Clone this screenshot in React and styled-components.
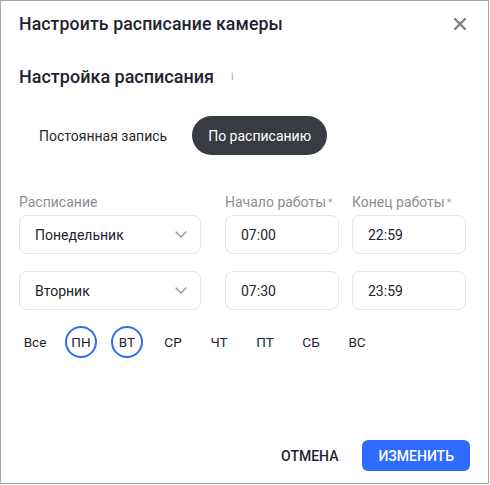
import React from "react";
import styled, { createGlobalStyle } from "styled-components";

const GlobalStyle = createGlobalStyle`
  body {
    margin: 0;
    font-family: Roboto, "Noto Sans", Arial, sans-serif;
    background: #ffffff;
  }
`;

const DialogStyled = styled.section`
  box-sizing: border-box;
  width: 489px;
  height: 484px;
  border: 1px solid #a6a6a6;
  background: #fff;
  padding: 0 18px;
  display: flex;
  flex-direction: column;
  color: #1f2330;
`;

const HeaderStyled = styled.header`
  display: flex;
  align-items: center;
  justify-content: space-between;
  height: 22px;
  margin-top: 12px;
`;

const TitleStyled = styled.h1`
  margin: 0;
  font-size: 17.7px;
  font-weight: 500;
  letter-spacing: 0.1px;
`;

const CloseStyled = styled.button`
  border: 0;
  background: none;
  padding: 0;
  width: 14px;
  height: 14px;
  margin-right: 3px;
  display: flex;
  cursor: pointer;
`;

const SectionTitleStyled = styled.h2`
  margin: 30px 0 0;
  height: 22px;
  display: flex;
  align-items: center;
  font-size: 18px;
  font-weight: 500;
`;

const InfoStyled = styled.span`
  margin-left: 17px;
  font-size: 11px;
  font-weight: 400;
  color: #a8abb1;
`;

const TabsStyled = styled.div`
  display: flex;
  align-items: center;
  margin-top: 29px;
  height: 39px;
`;

const TabStyled = styled.button`
  height: 39px;
  border: 0;
  border-radius: 20px;
  padding: 0 16px 0 ${(p) => (p.$active ? "16px" : "20px")};
  font-family: inherit;
  font-size: 14px;
  background: ${(p) => (p.$active ? "#393b42" : "transparent")};
  color: ${(p) => (p.$active ? "#ffffff" : "#2a2730")};
  margin-right: ${(p) => (p.$active ? "0" : "9px")};
  cursor: pointer;
`;

const FormGridStyled = styled.div`
  display: grid;
  grid-template-columns: 193px 114px 114px;
  column-gap: 13px;
  margin-top: 39px;
`;

const LabelStyled = styled.div`
  font-size: 14px;
  color: #8a8d94;
  height: 16px;
  line-height: 16px;
  margin-bottom: 5px;
  white-space: nowrap;
`;

const StarStyled = styled.span`
  font-size: 10px;
  vertical-align: 1px;
  margin-left: 2px;
  color: #9a9da3;
`;

const FieldStyled = styled.div`
  box-sizing: border-box;
  width: ${(p) => p.$width || "100%"};
  height: 39px;
  border: 1px solid #e2e5ea;
  border-radius: 8px;
  display: flex;
  align-items: center;
  justify-content: space-between;
  padding: 0 13px 0 15px;
  font-size: 14px;
  color: #1f2330;
  margin-bottom: ${(p) => (p.$last ? "0" : "17px")};
`;

const DaysStyled = styled.div`
  display: flex;
  gap: 14px;
  margin-top: 16px;
`;

const DayStyled = styled.button`
  box-sizing: border-box;
  width: 32px;
  height: 32px;
  border-radius: 50%;
  border: 2px solid ${(p) => (p.$selected ? "#2f6bf2" : "transparent")};
  background: none;
  padding: 0;
  font-family: inherit;
  font-size: 13.5px;
  color: #1f2330;
  display: flex;
  align-items: center;
  justify-content: center;
  cursor: pointer;
`;

const FooterStyled = styled.footer`
  margin-top: auto;
  margin-bottom: 12px;
  display: flex;
  justify-content: flex-end;
  align-items: center;
  gap: 8px;
`;

const ButtonStyled = styled.button`
  height: 31px;
  border: 0;
  border-radius: 6px;
  padding: 0 16px;
  font-family: inherit;
  font-size: 14px;
  font-weight: 500;
  text-transform: uppercase;
  background: ${(p) => (p.$primary ? "#2f6bff" : "transparent")};
  color: ${(p) => (p.$primary ? "#ffffff" : "#1f2330")};
  cursor: pointer;
`;

const Chevron = () => (
  <svg width="12" height="7" viewBox="0 0 12 7" fill="none">
    <path d="M1 1l5 5 5-5" stroke="#8a8d94" strokeWidth="1.2" strokeLinecap="round" strokeLinejoin="round" />
  </svg>
);

const rows = [
  { day: "Понедельник", start: "07:00", end: "22:59" },
  { day: "Вторник", start: "07:30", end: "23:59" },
];

const days = [
  { name: "Все" },
  { name: "ПН", selected: true },
  { name: "ВТ", selected: true },
  { name: "СР" },
  { name: "ЧТ" },
  { name: "ПТ" },
  { name: "СБ" },
  { name: "ВС" },
];

export default function App() {
  return (
    <>
      <GlobalStyle />
      <DialogStyled>
        <HeaderStyled>
          <TitleStyled>Настроить расписание камеры</TitleStyled>
          <CloseStyled aria-label="close">
            <svg width="14" height="14" viewBox="0 0 14 14">
              <path d="M2 2l10 10M12 2L2 12" stroke="#7d8087" strokeWidth="2.4" strokeLinecap="round" />
            </svg>
          </CloseStyled>
        </HeaderStyled>

        <SectionTitleStyled>
          Настройка расписания
          <InfoStyled>i</InfoStyled>
        </SectionTitleStyled>

        <TabsStyled>
          <TabStyled>Постоянная запись</TabStyled>
          <TabStyled $active>По расписанию</TabStyled>
        </TabsStyled>

        <FormGridStyled>
          <LabelStyled>Расписание</LabelStyled>
          <LabelStyled>
            Начало работы<StarStyled>*</StarStyled>
          </LabelStyled>
          <LabelStyled>
            Конец работы<StarStyled>*</StarStyled>
          </LabelStyled>
          {rows.map((r, i) => (
            <React.Fragment key={r.day}>
              <FieldStyled $width="182px" $last={i === rows.length - 1}>
                {r.day}
                <Chevron />
              </FieldStyled>
              <FieldStyled $last={i === rows.length - 1}>{r.start}</FieldStyled>
              <FieldStyled $last={i === rows.length - 1}>{r.end}</FieldStyled>
            </React.Fragment>
          ))}
        </FormGridStyled>

        <DaysStyled>
          {days.map((d) => (
            <DayStyled key={d.name} $selected={d.selected}>
              {d.name}
            </DayStyled>
          ))}
        </DaysStyled>

        <FooterStyled>
          <ButtonStyled>Отмена</ButtonStyled>
          <ButtonStyled $primary>Изменить</ButtonStyled>
        </FooterStyled>
      </DialogStyled>
    </>
  );
}
